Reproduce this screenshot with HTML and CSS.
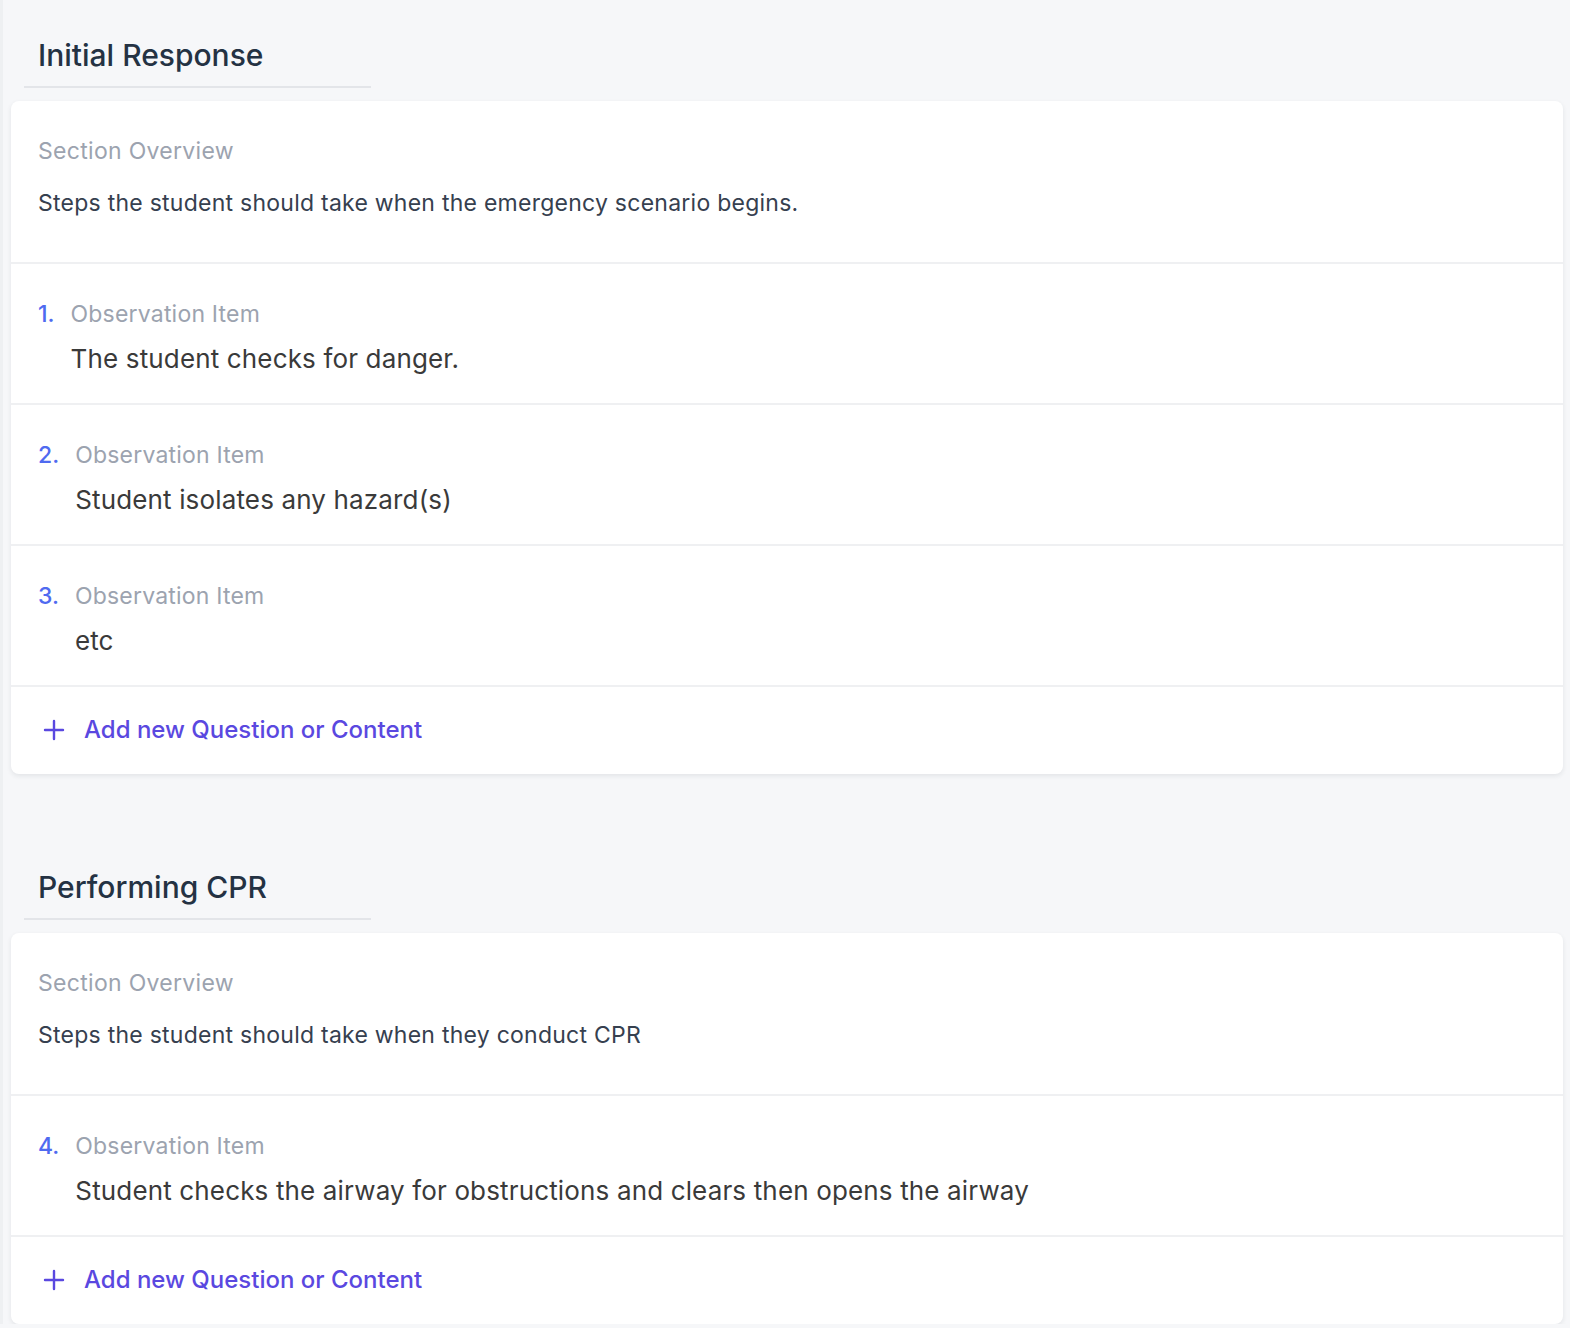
FILE: index.html
```html
<!DOCTYPE html>
<html lang="en">

<head>
    <meta charset="UTF-8">
    <meta name="viewport" content="width=device-width, initial-scale=1.0">
    <title>Checklist Sections</title>
    <link rel="stylesheet" href="styles.css">
</head>

<body>
    <div class="page">
        <section class="section">
            <div class="section-head">
                <h2 class="section-title">Initial Response</h2>
            </div>
            <div class="card">
                <div class="overview">
                    <div class="overview-label">Section Overview</div>
                    <p class="overview-text">Steps the student should take when the emergency scenario begins.</p>
                </div>
                <div class="item">
                    <span class="item-num">1.</span>
                    <div class="item-body">
                        <div class="item-label">Observation Item</div>
                        <div class="item-text">The student checks for danger.</div>
                    </div>
                </div>
                <div class="item">
                    <span class="item-num">2.</span>
                    <div class="item-body">
                        <div class="item-label">Observation Item</div>
                        <div class="item-text">Student isolates any hazard(s)</div>
                    </div>
                </div>
                <div class="item">
                    <span class="item-num">3.</span>
                    <div class="item-body">
                        <div class="item-label">Observation Item</div>
                        <div class="item-text">etc</div>
                    </div>
                </div>
                <div class="add-row">
                    <svg class="add-icon" viewBox="0 0 24 24" width="24" height="24">
                        <path d="M12 3v18M3 12h18" />
                    </svg>
                    <span>Add new Question or Content</span>
                </div>
            </div>
        </section>

        <section class="section">
            <div class="section-head">
                <h2 class="section-title">Performing CPR</h2>
            </div>
            <div class="card">
                <div class="overview">
                    <div class="overview-label">Section Overview</div>
                    <p class="overview-text">Steps the student should take when they conduct CPR</p>
                </div>
                <div class="item">
                    <span class="item-num">4.</span>
                    <div class="item-body">
                        <div class="item-label">Observation Item</div>
                        <div class="item-text">Student checks the airway for obstructions and clears then opens the airway</div>
                    </div>
                </div>
                <div class="add-row">
                    <svg class="add-icon" viewBox="0 0 24 24" width="24" height="24">
                        <path d="M12 3v18M3 12h18" />
                    </svg>
                    <span>Add new Question or Content</span>
                </div>
            </div>
        </section>
    </div>
</body>

</html>
```

FILE: styles.css
```css
/* base */
body {
    margin: 0;
    padding: 0;
    background-color: #f6f7f9;
    font-family: Inter, "Noto Sans", sans-serif;
}

.page {
    border-left: 3px solid #eef0f2;
    padding: 0 7px 0 8px;
    display: flex;
    flex-direction: column;
    gap: 58px;
}

/* section heading */
.section-head {
    padding: 37px 0 13px 13px;
}

.section-title {
    margin: 0;
    width: 333px;
    padding: 0 0 13px 14px;
    border-bottom: 2px solid #e3e5e9;
    font-size: 30px;
    line-height: 36px;
    font-weight: 500;
    color: #243243;
}

/* card */
.card {
    background-color: #fff;
    border-radius: 8px;
    box-shadow: 0 2px 5px rgba(30, 40, 60, 0.09);
}

.overview {
    padding: 35px 27px 44px;
}

.overview-label {
    font-size: 23px;
    line-height: 30px;
    letter-spacing: 0.3px;
    color: #9ca3af;
}

.overview-text {
    margin: 22px 0 0;
    font-size: 23px;
    line-height: 30px;
    letter-spacing: 0.25px;
    color: #36404f;
}

.item {
    display: flex;
    gap: 16px;
    padding: 35px 27px 27px;
    border-top: 2px solid #eff0f2;
}

.item-num {
    font-size: 23px;
    line-height: 30px;
    font-weight: 500;
    color: #4f6af0;
}

.item-body {
    display: flex;
    flex-direction: column;
    gap: 13px;
}

.item-label {
    font-size: 23px;
    line-height: 30px;
    letter-spacing: 0.2px;
    color: #9ca3af;
}

.item-text {
    font-size: 26px;
    line-height: 34px;
    letter-spacing: 0.15px;
    color: #3a3a3a;
}

.add-row {
    display: flex;
    align-items: center;
    gap: 18px;
    padding: 28px 31px 29px;
    border-top: 2px solid #eff0f2;
    font-size: 24px;
    line-height: 30px;
    font-weight: 500;
    color: #5a48e0;
    cursor: pointer;
}

.add-icon {
    fill: none;
    stroke: #5a48e0;
    stroke-width: 2.4;
    stroke-linecap: round;
}
```
